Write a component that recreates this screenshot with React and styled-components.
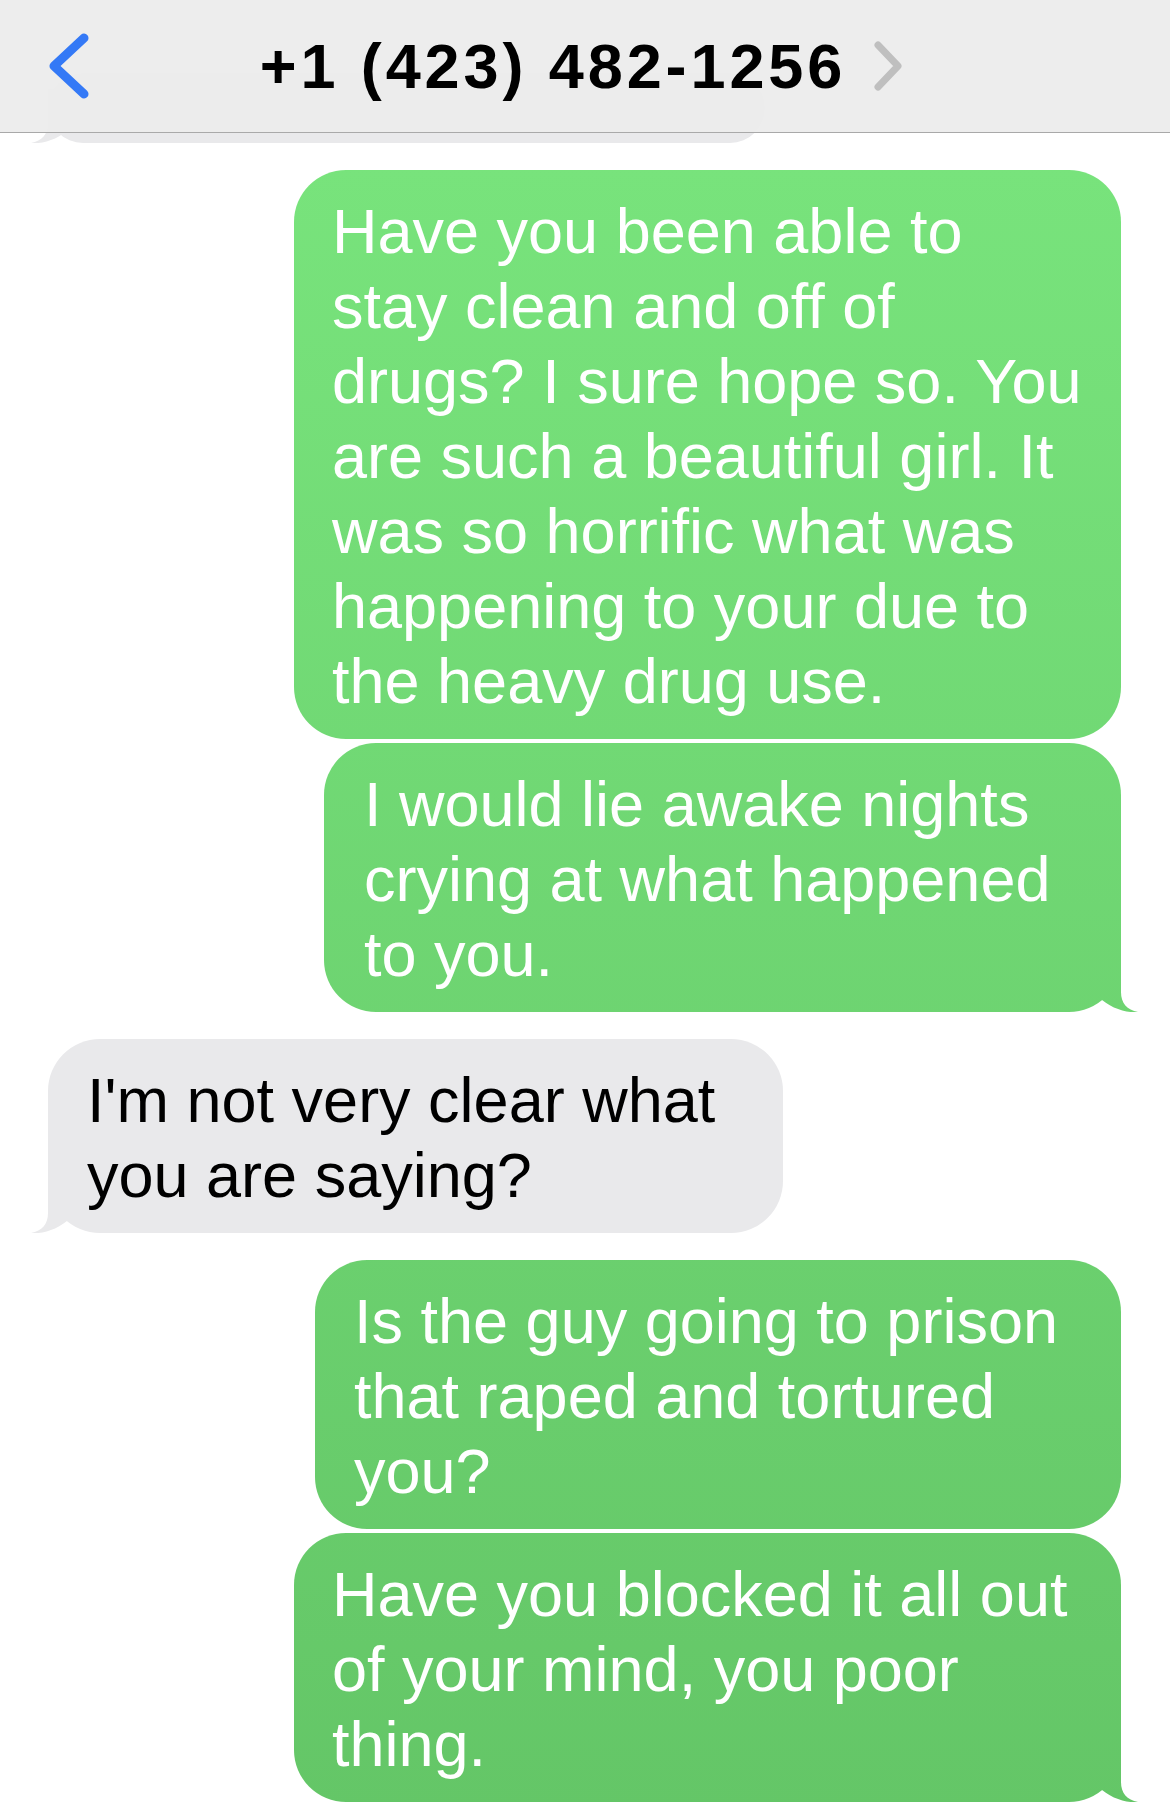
import styled, { createGlobalStyle } from 'styled-components';

const GlobalStyle = createGlobalStyle`
  body {
    margin: 0;
    background: #ffffff;
    font-family: "Liberation Sans", Arial, sans-serif;
  }
`;

const GREEN = 'linear-gradient(180deg, #7ae67e 0%, #64c667 100%) fixed';
const GRAY = '#e9e9eb';

const Page = styled.div`
  display: flex;
  flex-direction: column;
  min-height: 1813px;
  overflow: hidden;
`;

const Header = styled.header`
  position: relative;
  z-index: 2;
  height: 132px;
  display: grid;
  grid-template-columns: 1fr auto 1fr;
  align-items: center;
  background: rgba(236, 236, 236, 0.95);
  border-bottom: 1px solid #a9a9a9;
`;

const BackButton = styled.div`
  display: flex;
  align-items: center;
  padding-left: 48px;
`;

const TitleGroup = styled.div`
  display: flex;
  align-items: center;
  gap: 26px;
  padding-right: 6px;
`;

const Title = styled.h1`
  margin: 0;
  font-size: 63px;
  line-height: 63px;
  font-weight: 700;
  letter-spacing: 3.9px;
  color: #000;
`;

const Thread = styled.main`
  display: flex;
  flex-direction: column;
  padding: 0 49px 40px 48px;
`;

const Bubble = styled.div`
  position: relative;
  box-sizing: border-box;
  align-self: ${(p) => (p.$me ? 'flex-end' : 'flex-start')};
  width: ${(p) => p.$width}px;
  margin-top: ${(p) => p.$gap}px;
  padding: 24px 20px 20px ${(p) => p.$pad}px;
  border-radius: 52px;
  background: ${(p) => (p.$me ? GREEN : GRAY)};
  color: ${(p) => (p.$me ? '#ffffff' : '#000000')};
  font-size: 63px;
  line-height: 75px;
`;

const ScrolledBubble = styled(Bubble)`
  height: 70px;
  padding: 0;
`;

const Line = styled.span`
  display: block;
  white-space: nowrap;
`;

const Tail = styled.div`
  position: absolute;
  bottom: 0;
  width: 41px;
  height: 54px;
  background: ${(p) => (p.$me ? GREEN : GRAY)};
  clip-path: path('M 24 0 L 24 34 C 24 45 30 52 41 54 C 30 55 16 51 5 42 L 0 42 L 0 0 Z');
  ${(p) => (p.$me ? 'right: -17px;' : 'left: -17px; transform: scaleX(-1);')}
`;

const messages = [
  {
    me: true,
    gap: 27,
    width: 827,
    pad: 38,
    lines: [
      'Have you been able to',
      'stay clean and off of',
      'drugs? I sure hope so. You',
      'are such a beautiful girl. It',
      'was so horrific what was',
      'happening to your due to',
      'the heavy drug use.',
    ],
  },
  {
    me: true,
    gap: 4,
    width: 797,
    pad: 40,
    tail: true,
    lines: ['I would lie awake nights', 'crying at what happened', 'to you.'],
  },
  {
    me: false,
    gap: 27,
    width: 735,
    pad: 39,
    tail: true,
    lines: ["I'm not very clear what", 'you are saying?'],
  },
  {
    me: true,
    gap: 27,
    width: 806,
    pad: 39,
    lines: ['Is the guy going to prison', 'that raped and tortured', 'you?'],
  },
  {
    me: true,
    gap: 4,
    width: 827,
    pad: 38,
    tail: true,
    lines: ['Have you blocked it all out', 'of your mind, you poor', 'thing.'],
  },
];

const App = () => {
  return (
    <Page>
      <GlobalStyle />
      <Header>
        <BackButton>
          <svg width="44" height="66" viewBox="0 0 44 66">
            <path d="M36 5 L6 33 L36 61" fill="none" stroke="#3479f6" strokeWidth="9" strokeLinecap="round" strokeLinejoin="round" />
          </svg>
        </BackButton>
        <TitleGroup>
          <Title>+1 (423) 482-1256</Title>
          <svg width="32" height="50" viewBox="0 0 32 50">
            <path d="M6 4 L26 25 L6 46" fill="none" stroke="#bfbfbf" strokeWidth="7" strokeLinecap="round" strokeLinejoin="round" />
          </svg>
        </TitleGroup>
        <div />
      </Header>
      <Thread>
        <ScrolledBubble $me={false} $gap={-60} $width={717} $pad={39}>
          <Tail $me={false} />
        </ScrolledBubble>
        {messages.map((m, i) => (
          <Bubble key={i} $me={m.me} $gap={m.gap} $width={m.width} $pad={m.pad}>
            {m.lines.map((l, j) => (
              <Line key={j}>{l}</Line>
            ))}
            {m.tail && <Tail $me={m.me} />}
          </Bubble>
        ))}
      </Thread>
    </Page>
  );
};

export default App;
